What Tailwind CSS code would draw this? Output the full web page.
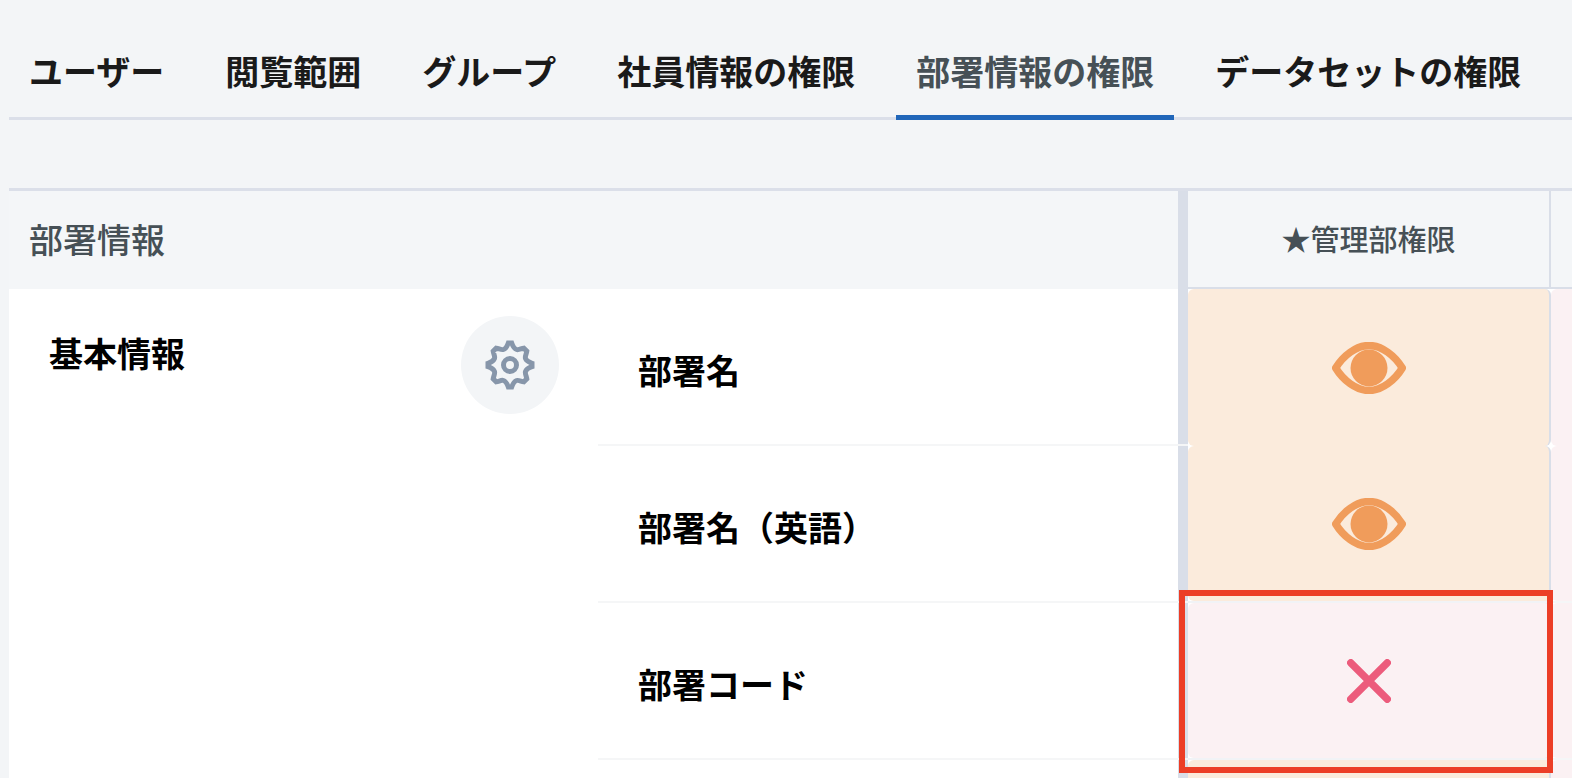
<!DOCTYPE html>
<html lang="ja">
<head>
  <meta charset="UTF-8">
  <meta name="viewport" content="width=device-width, initial-scale=1.0">
  <title>部署情報の権限</title>
  <script src="https://cdn.jsdelivr.net/npm/@tailwindcss/browser@4"></script>
</head>
<body class="bg-[#f3f5f7] font-['Noto_Sans_CJK_JP',sans-serif] text-black">
  <div class="h-screen overflow-hidden pl-[9px]">

    <!-- Tabs -->
    <nav class="flex h-[120px] items-stretch gap-[21px] whitespace-nowrap border-b-3 border-[#dbdfe9] pt-[26px] text-[34px] font-bold text-[#1a1a1a]">
      <a href="#" class="-mb-[3px] flex items-center px-5 pb-[5px]">ユーザー</a>
      <a href="#" class="-mb-[3px] flex items-center px-5 pb-[5px]">閲覧範囲</a>
      <a href="#" class="-mb-[3px] flex items-center px-5 pb-[5px]">グループ</a>
      <a href="#" class="-mb-[3px] flex items-center px-5 pb-[5px]">社員情報の権限</a>
      <a href="#" aria-current="page" class="-mb-[3px] flex items-center border-b-5 border-[#2066b9] px-5 text-[#465056]">部署情報の権限</a>
      <a href="#" class="-mb-[3px] flex items-center px-5 pb-[5px]">データセットの権限</a>
    </nav>

    <!-- Permission table -->
    <table class="mt-[68px] w-full table-fixed border-separate border-spacing-0 border-t-3 border-[#dbdfe9]">
      <colgroup>
        <col class="w-[589px]">
        <col>
        <col class="w-[363px]">
        <col class="w-[21px]">
      </colgroup>
      <thead class="text-[#465056]">
        <tr class="h-[98px]">
          <th colspan="2" scope="col" class="border-r-10 border-[#d9dee8] bg-[#f4f6f8] px-5 pb-1 text-left text-[34px] font-medium">部署情報</th>
          <th scope="col" class="border-r-2 border-b-2 border-[#d9dee8] bg-[#f4f6f8] text-[29px] font-medium">★管理部権限</th>
          <td class="border-b-2 border-[#d9dee8] bg-[#f4f6f8]"></td>
        </tr>
      </thead>
      <tbody>
        <tr class="h-[157px]">
          <th rowspan="4" scope="rowgroup" class="bg-white p-0 align-top text-[34px]">
            <div class="flex justify-between pt-[27px] pr-[39px] pl-10">
              <span class="pt-3 leading-[50px] font-bold">基本情報</span>
              <button type="button" aria-label="設定" class="flex size-[98px] items-center justify-center rounded-full bg-[#f3f5f7]">
                <svg class="size-[50px]" viewBox="0 0 50 50" fill="none" stroke="#8796aa" stroke-width="5">
                  <path d="M23.300 3H26.700C27.600 5.500 29.500 8.800 31.600 9.500C33.600 10.200 36 8.600 38.800 8.200L41.800 11.200C41.400 14 39.800 16.400 40.500 18.400C41.200 20.500 44.500 22.400 47 23.300V26.700C44.500 27.600 41.200 29.500 40.500 31.600C39.800 33.600 41.400 36 41.800 38.800L38.800 41.800C36 41.400 33.600 39.800 31.600 40.500C29.500 41.200 27.600 44.500 26.700 47H23.300C22.400 44.500 20.500 41.200 18.400 40.500C16.400 39.800 14 41.400 11.200 41.800L8.200 38.800C8.600 36 10.200 33.600 9.500 31.600C8.800 29.500 5.500 27.600 3 26.700V23.300C5.500 22.400 8.800 20.500 9.500 18.400C10.200 16.400 8.600 14 8.200 11.200L11.200 8.200C14 8.600 16.400 10.200 18.400 9.500C20.500 8.800 22.400 5.500 23.300 3z" />
                  <circle cx="25" cy="25" r="6.500" />
                </svg>
              </button>
            </div>
          </th>
          <th scope="row" class="border-b-2 border-[#f5f6f7] bg-white p-0 text-left text-[34px] font-bold">
            <div class="flex h-[155px] items-center border-r-10 border-[#d9dee8] pt-1.5 pl-10">部署名</div>
          </th>
          <td class="bg-white p-0">
            <div class="flex h-[157px] items-center justify-center rounded-md border-r-2 border-[#d9dee8] bg-[#fbebdc]">
              <svg class="h-[52px] w-[74px]" viewBox="0 0 74 52" role="img" aria-label="閲覧可">
                <path d="M3.700 26C11 14 24 3.500 37 3.500S63 14 70.300 26C63 38 50 48.500 37 48.500S11 38 3.700 26z" fill="none" stroke="#f09c5b" stroke-width="7.500" stroke-linejoin="round" />
                <circle cx="37" cy="26" r="18.500" fill="#f09c5b" />
              </svg>
            </div>
          </td>
          <td class="bg-white p-0"><div class="h-[157px] rounded-l-md bg-[#fbf1f3]"></div></td>
        </tr>
        <tr class="h-[157px]">
          <th scope="row" class="border-b-2 border-[#f5f6f7] bg-white p-0 text-left text-[34px] font-bold">
            <div class="flex h-[155px] items-center border-r-10 border-[#d9dee8] pt-1.5 pl-10">部署名（英語）</div>
          </th>
          <td class="border-b-2 border-[#f1f3f6] bg-white p-0">
            <div class="flex h-[155px] items-center justify-center rounded-md border-r-2 border-[#d9dee8] bg-[#fbebdc]">
              <svg class="h-[52px] w-[74px]" viewBox="0 0 74 52" role="img" aria-label="閲覧可">
                <path d="M3.700 26C11 14 24 3.500 37 3.500S63 14 70.300 26C63 38 50 48.500 37 48.500S11 38 3.700 26z" fill="none" stroke="#f09c5b" stroke-width="7.500" stroke-linejoin="round" />
                <circle cx="37" cy="26" r="18.500" fill="#f09c5b" />
              </svg>
            </div>
          </td>
          <td class="border-b-2 border-[#f5f6f7] bg-white p-0"><div class="h-[155px] rounded-l-md bg-[#fbf1f3]"></div></td>
        </tr>
        <tr class="h-[157px]">
          <th scope="row" class="border-b-2 border-[#f5f6f7] bg-white p-0 text-left text-[34px] font-bold">
            <div class="flex h-[155px] items-center border-r-10 border-[#d9dee8] pt-1.5 pl-10">部署コード</div>
          </th>
          <td class="relative z-10 border-b-2 border-[#f1f3f6] bg-white p-0">
            <div class="flex h-[155px] items-center justify-center rounded-md border-r-2 border-[#d9dee8] bg-[#fbf1f3]">
              <svg class="size-11" viewBox="0 0 44 44" fill="none" stroke="#ec5c7c" stroke-width="7.500" stroke-linecap="round" role="img" aria-label="権限なし">
                <path d="M3.800 3.800l36.400 36.400M40.200 3.800l-36.400 36.400" />
              </svg>
            </div>
            <!-- Highlight frame -->
            <div class="absolute -top-[13px] -right-[2px] -bottom-[15px] -left-[9px] border-6 border-[#ec3e26]"></div>
          </td>
          <td class="border-b-2 border-[#f5f6f7] bg-white p-0"><div class="h-[155px] rounded-l-md bg-[#fbf1f3]"></div></td>
        </tr>
        <tr class="h-[157px]">
          <th scope="row" class="bg-white p-0"><div class="h-[157px] border-r-10 border-[#d9dee8]"></div></th>
          <td class="bg-white p-0"><div class="h-[157px] rounded-md border-r-2 border-[#d9dee8] bg-[#fbebdc]"></div></td>
          <td class="bg-white p-0"><div class="h-[157px] rounded-l-md bg-[#fbf1f3]"></div></td>
        </tr>
      </tbody>
    </table>
  </div>
</body>
</html>
